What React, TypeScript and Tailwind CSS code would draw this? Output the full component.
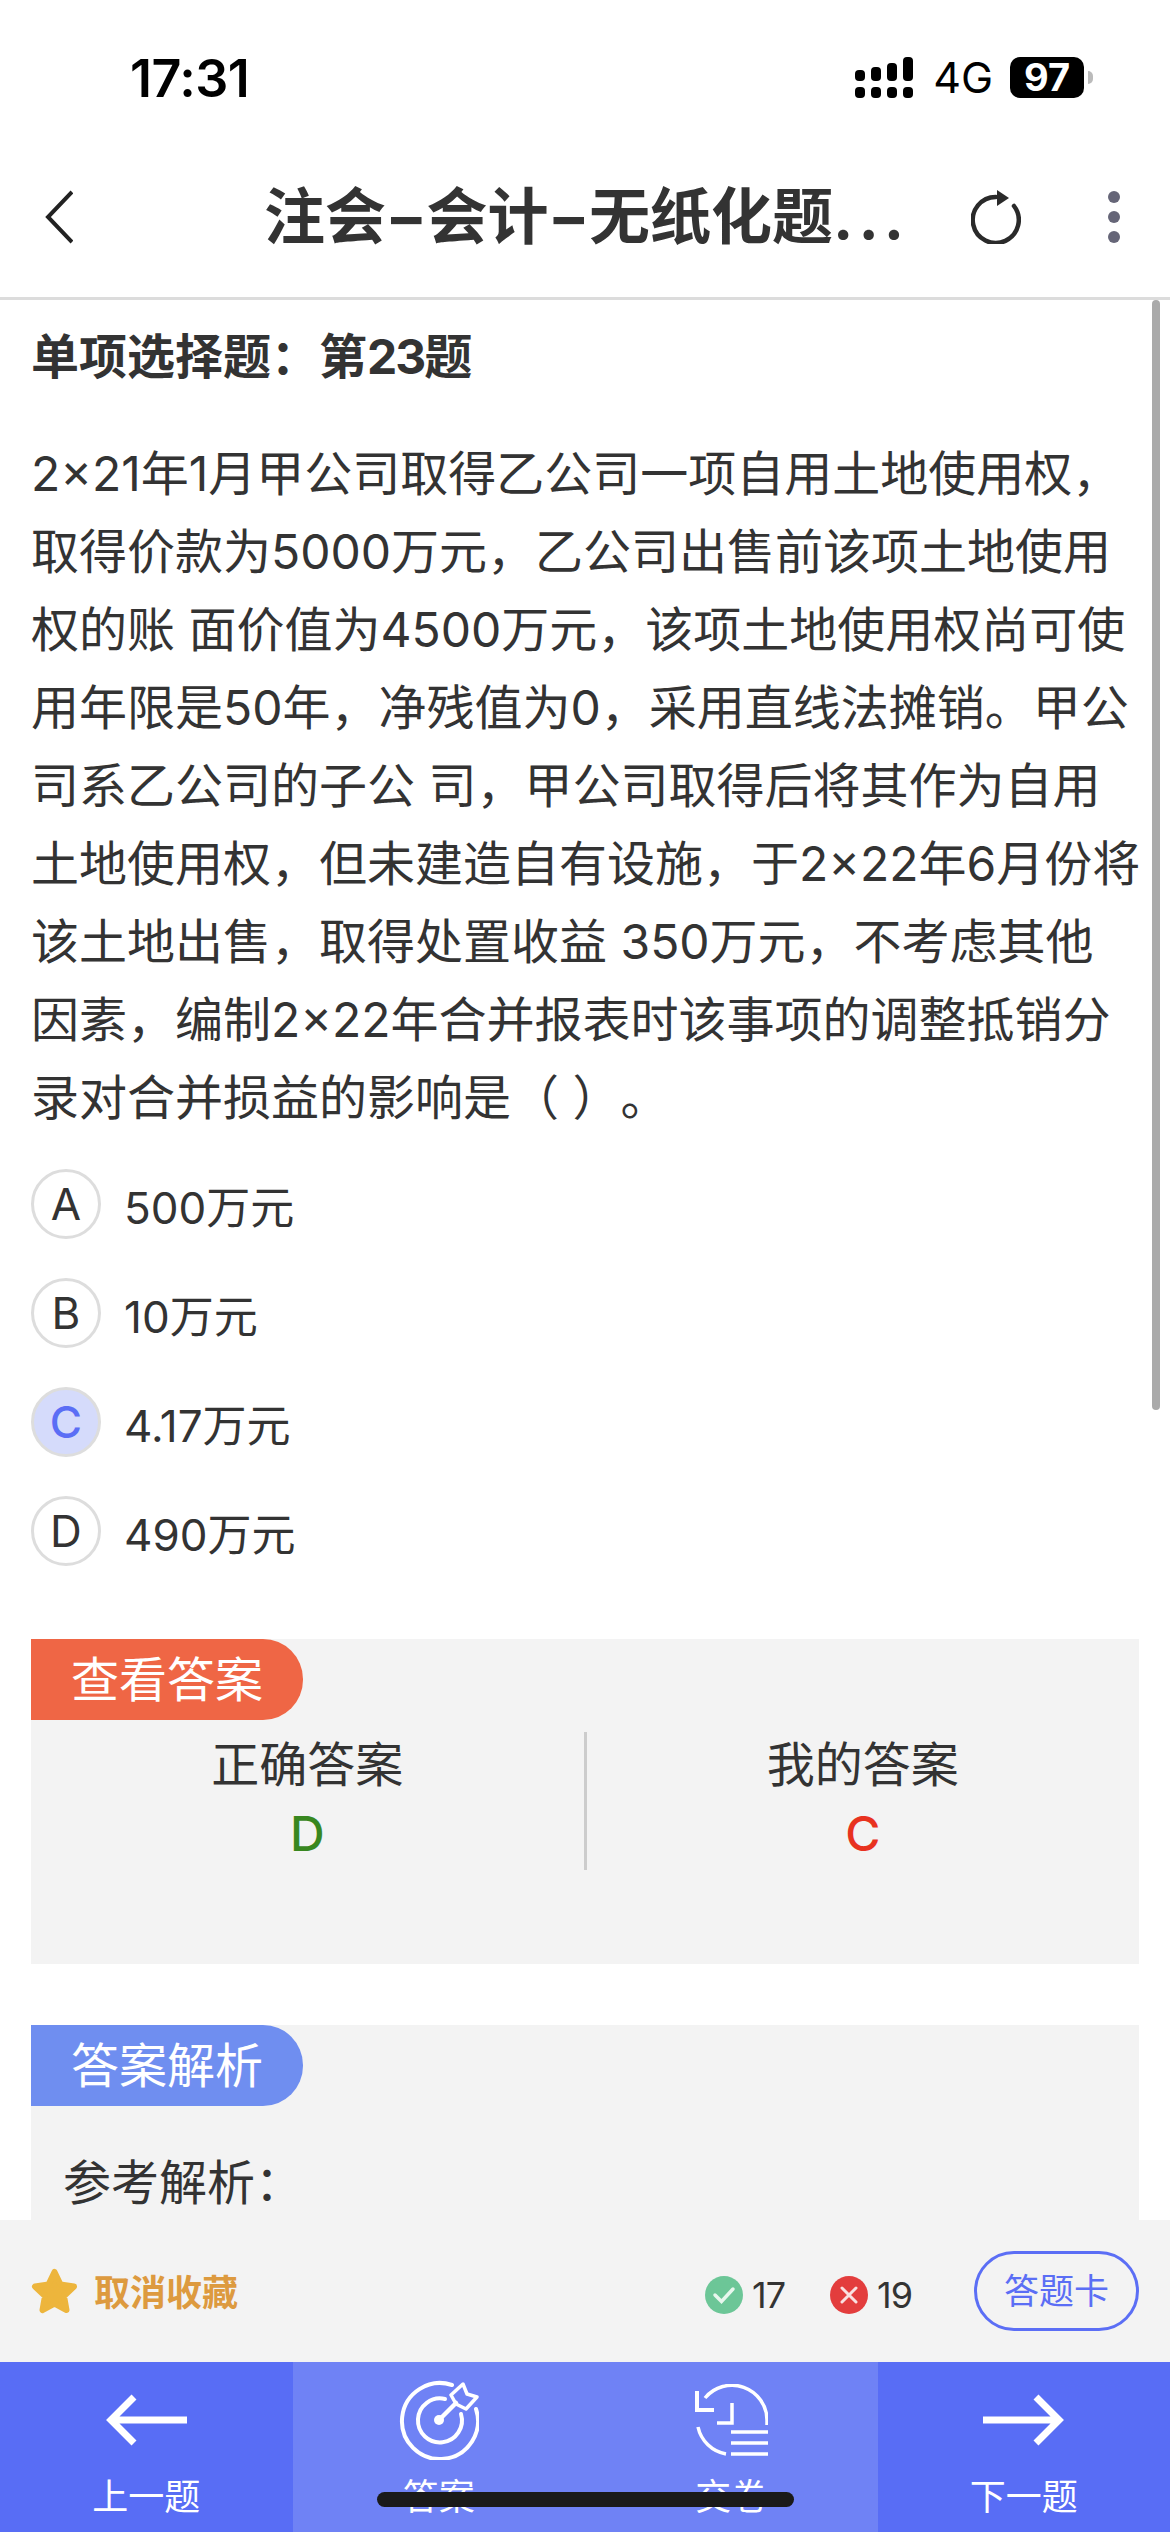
const FONT = "font-['Inter','Noto_Sans_CJK_SC',sans-serif]"

const question = [
	"2×21年1月甲公司取得乙公司一项自用土地使用权，",
	"取得价款为5000万元，乙公司出售前该项土地使用",
	"权的账 面价值为4500万元，该项土地使用权尚可使",
	"用年限是50年，净残值为0，采用直线法摊销。甲公",
	"司系乙公司的子公 司，甲公司取得后将其作为自用",
	"土地使用权，但未建造自有设施，于2×22年6月份将",
	"该土地出售，取得处置收益 350万元，不考虑其他",
	"因素，编制2×22年合并报表时该事项的调整抵销分",
	"录对合并损益的影响是（ ）。"
]

const options = [
	{ key: "A", text: "500万元" },
	{ key: "B", text: "10万元" },
	{ key: "C", text: "4.17万元", picked: true },
	{ key: "D", text: "490万元" }
]

const SignalIcon = () => (
	<svg width="59" height="41" viewBox="0 0 59 41" fill="#000">
		<rect x="0" y="13" width="10" height="11" rx="4" />
		<rect x="16" y="10" width="10" height="14" rx="4" />
		<rect x="32" y="6" width="10" height="18" rx="4" />
		<rect x="48" y="0" width="10" height="24" rx="4" />
		<rect x="0" y="30" width="10" height="11" rx="4" />
		<rect x="16" y="30" width="10" height="11" rx="4" />
		<rect x="32" y="30" width="10" height="11" rx="4" />
		<rect x="48" y="30" width="10" height="11" rx="4" />
	</svg>
)

const BackIcon = () => (
	<svg width="28" height="54" viewBox="0 0 28 54" fill="none" stroke="#222" strokeWidth="4">
		<path d="M27 2 L3 27 L27 52" />
	</svg>
)

const RefreshIcon = () => (
	<svg width="50" height="54" viewBox="0 0 50 54" fill="none">
		<path d="M43 16 A23 23 0 1 1 25 7" stroke="#2a2a2a" strokeWidth="4.5" strokeLinecap="round" />
		<path d="M26 0 L38 8 L26 16 Z" fill="#2a2a2a" />
	</svg>
)

const StarIcon = () => (
	<svg width="47" height="46" viewBox="0 0 47 46">
		<path
			d="M23.5 4 L29.5 16.5 L43 18.5 L33 28 L35.5 42 L23.5 35.5 L11.5 42 L14 28 L4 18.5 L17.5 16.5 Z"
			fill="#edb53c"
			stroke="#edb53c"
			strokeWidth="6"
			strokeLinejoin="round"
		/>
	</svg>
)

const CheckBadge = () => (
	<svg width="38" height="38" viewBox="0 0 38 38" fill="none">
		<circle cx="19" cy="19" r="19" fill="#6cc697" />
		<path d="M10 19 L16.500 25.500 L28 13" stroke="#e8f7ee" strokeWidth="3.500" strokeLinecap="round" />
	</svg>
)

const CrossBadge = () => (
	<svg width="38" height="38" viewBox="0 0 38 38" fill="none">
		<circle cx="19" cy="19" r="19" fill="#e33d3d" />
		<path d="M12 12 L26 26 M26 12 L12 26" stroke="#f9e0e0" strokeWidth="3" strokeLinecap="round" />
	</svg>
)

const ArrowIcon = ({ flip }: { flip?: boolean }) => (
	<svg
		width="81"
		height="52"
		viewBox="0 0 81 52"
		fill="none"
		stroke="#fff"
		strokeWidth="7"
		className={flip ? "-scale-x-100" : ""}
	>
		<path d="M81 26 H6 M28 3 L5 26 L28 49" strokeLinejoin="miter" />
	</svg>
)

const TargetIcon = () => (
	<svg width="80" height="80" viewBox="0 0 80 80" fill="none" stroke="#fff" strokeWidth="4" strokeLinecap="round">
		<path d="M53 5 A38 38 0 1 0 77 29" />
		<path d="M46 19 A22 22 0 1 0 62 34" />
		<path d="M40 40 L57 23" strokeWidth="4.5" />
		<circle cx="40" cy="40" r="5" fill="#fff" stroke="none" />
		<path d="M64 4 L68 14 L78 17 L67 29 L57 24 L52 15 Z" strokeWidth="3.500" strokeLinejoin="round" />
	</svg>
)

const HistoryIcon = () => (
	<svg width="73" height="72" viewBox="0 0 73 72" fill="none" stroke="#fff" strokeWidth="3.500">
		<path d="M72 41 V36 A35 35 0 0 0 10 14" />
		<path d="M2 7 V26 H19" strokeWidth="4" />
		<path d="M22 39 H37 V19" />
		<path d="M3 43 A35 35 0 0 0 31 70" />
		<path d="M36 48 H73 M36 59 H73 M36 70 H73" />
	</svg>
)

const AnswerPanelTag = ({ label, color }: { label: string; color: string }) => (
	<div className={`h-[81px] w-[272px] rounded-r-[40px] flex items-center pl-[40px] text-[48px] text-white ${color}`}>
		{label}
	</div>
)

const NavItem = ({ label, active, children }: { label: string; active?: boolean; children: React.ReactNode }) => (
	<div className={`flex-1 flex flex-col items-center pt-[18px] ${active ? "bg-[#6f82f5]" : ""}`}>
		<div className="h-[80px] flex items-center justify-center">{children}</div>
		<div className="mt-[15px] text-[36px] leading-[44px] text-white">{label}</div>
	</div>
)

export default function App() {
	return (
		<div lang="zh-CN" className={`${FONT} relative w-[1170px] h-[2532px] overflow-hidden bg-white text-[#333] flex flex-col`}>
			{/* status bar */}
			<div className="h-[150px] shrink-0 flex items-start justify-between pt-[49px] pl-[130px] pr-[77px]">
				<div className="text-[52px] leading-[60px] font-semibold text-black tracking-[-0.5px]">17:31</div>
				<div className="flex items-center pt-[8px]">
					<SignalIcon />
					<span className="ml-[19px] text-[43px] leading-[41px] text-black">4G</span>
					<div className="ml-[17px] w-[74px] h-[41px] rounded-[10px] bg-black flex items-center justify-center text-[38px] font-bold text-white">
						97
					</div>
					<div className="ml-[4px] w-[5px] h-[13px] rounded-r-full bg-[#bbb]" />
				</div>
			</div>

			{/* nav */}
			<div className="h-[150px] shrink-0 border-b-[3px] border-[#dcdcdc] flex items-center pl-[45px] pb-[13px]">
				<BackIcon />
				<div className="ml-[191px] w-[642px] text-[61px] leading-[64px] font-bold whitespace-nowrap">
					注会<span className="mx-[5px]">–</span>会计<span className="mx-[5px]">–</span>无纸化题
					<span className="tracking-[5px]">...</span>
				</div>
				<div className="ml-[65px]">
					<RefreshIcon />
				</div>
				<div className="ml-[87px] flex flex-col gap-[8px]">
					<div className="w-[12px] h-[12px] rounded-full bg-[#666678]" />
					<div className="w-[12px] h-[12px] rounded-full bg-[#666678]" />
					<div className="w-[12px] h-[12px] rounded-full bg-[#666678]" />
				</div>
			</div>

			{/* content */}
			<div className="relative flex-1 overflow-hidden px-[31px] pt-[28px]">
				<div className="text-[48px] leading-[58px] font-bold">
					单项选择题：第<span className="tracking-[-2px]">23</span>题
				</div>
				<div className="mt-[49px] text-[48px] leading-[78px] whitespace-nowrap [text-spacing-trim:space-all]">
					{question.map((line) => (
						<div key={line}>{line}</div>
					))}
				</div>

				<div className="mt-[32px]">
					{options.map((o) => (
						<div key={o.key} className="h-[70px] mb-[39px] flex items-center">
							<div
								className={`w-[70px] h-[70px] rounded-full border-[3px] border-[#ddd] flex items-center justify-center text-[44px] ${
									o.picked ? "bg-[#d5dbfb] text-[#5b6ef5] font-medium" : ""
								}`}
							>
								{o.key}
							</div>
							<div className="ml-[23px] pt-[8px] text-[44px]">{o.text}</div>
						</div>
					))}
				</div>

				<div className="mt-[73px] h-[325px] bg-[#f3f3f3]">
					<AnswerPanelTag label="查看答案" color="bg-[#ef6645]" />
					<div className="mt-[12px] h-[138px] flex">
						<div className="flex-1 flex flex-col items-center text-[48px] leading-[60px]">
							<div className="pt-[3px]">正确答案</div>
							<div className="mt-[9px] font-medium text-[#38871f]">D</div>
						</div>
						<div className="w-[3px] bg-[#ccc]" />
						<div className="flex-1 flex flex-col items-center text-[48px] leading-[60px]">
							<div className="pt-[3px]">我的答案</div>
							<div className="mt-[9px] font-medium text-[#e8321f]">C</div>
						</div>
					</div>
				</div>

				<div className="mt-[61px] h-[400px] bg-[#f3f3f3]">
					<AnswerPanelTag label="答案解析" color="bg-[#6f8ef0]" />
					<div className="mt-[47px] pl-[32px] text-[48px] leading-[60px]">参考解析：</div>
				</div>

				{/* scrollbar */}
				<div className="absolute right-[10px] top-0 w-[8px] h-[1110px] rounded-full bg-[#aaa]" />
			</div>

			{/* collect row */}
			<div className="h-[142px] shrink-0 bg-[#f3f3f3] flex items-center pl-[31px] pr-[31px]">
				<StarIcon />
				<div className="ml-[16px] pt-[3px] text-[36px] font-bold text-[#dd9a3f]">取消收藏</div>
				<div className="ml-auto flex items-center pt-[8px]">
					<CheckBadge />
					<span className="ml-[9px] text-[36px] tracking-[-1px]">17</span>
					<div className="ml-[45px]">
						<CrossBadge />
					</div>
					<span className="ml-[9px] text-[36px] tracking-[-1px]">19</span>
				</div>
				<div className="ml-[62px] w-[165px] h-[80px] rounded-full border-[3px] border-[#5b6ef5] flex items-center justify-center text-[35px] text-[#5b6ef5]">
					答题卡
				</div>
			</div>

			{/* bottom nav */}
			<div className="h-[170px] shrink-0 bg-[#586df5] flex">
				<NavItem label="上一题">
					<ArrowIcon />
				</NavItem>
				<NavItem label="答案" active>
					<TargetIcon />
				</NavItem>
				<NavItem label="交卷" active>
					<HistoryIcon />
				</NavItem>
				<NavItem label="下一题">
					<ArrowIcon flip />
				</NavItem>
			</div>

			{/* home indicator */}
			<div className="absolute left-[377px] bottom-[25px] w-[417px] h-[15px] rounded-full bg-[#1a1a1a]" />
		</div>
	)
}
